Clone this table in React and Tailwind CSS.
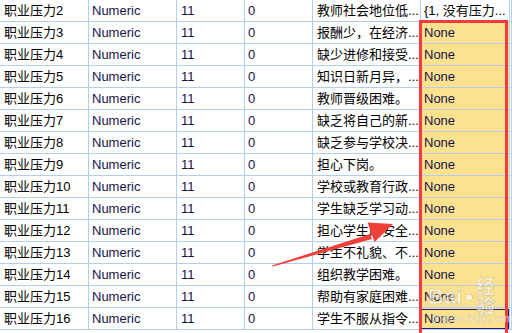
import React from 'react';

const rows = [
  ['职业压力2', '教师社会地位低...', '{1, 没有压力...'],
  ['职业压力3', '报酬少，在经济...', 'None'],
  ['职业压力4', '缺少进修和接受...', 'None'],
  ['职业压力5', '知识日新月异，...', 'None'],
  ['职业压力6', '教师晋级困难。', 'None'],
  ['职业压力7', '缺乏将自己的新...', 'None'],
  ['职业压力8', '缺乏参与学校决...', 'None'],
  ['职业压力9', '担心下岗。', 'None'],
  ['职业压力10', '学校或教育行政...', 'None'],
  ['职业压力11', '学生缺乏学习动...', 'None'],
  ['职业压力12', '担心学生的安全...', 'None'],
  ['职业压力13', '学生不礼貌、不...', 'None'],
  ['职业压力14', '组织教学困难。', 'None'],
  ['职业压力15', '帮助有家庭困难...', 'None'],
  ['职业压力16', '学生不服从指令...', 'None'],
];

const cell = 'h-full shrink-0 border-r border-[#b3cdec] flex items-center overflow-hidden whitespace-nowrap';

const Row = ({ name, label, values, index, last }) => {
  const isNone = values === 'None';
  return (
    <div className="flex h-[22px] border-b border-[#b3cdec]">
      <div className={`${cell} w-[89px] pl-[4px] text-black`}>{name}</div>
      <div className={`${cell} w-[88px] pl-[3px] text-[#14144a]`}>Numeric</div>
      <div className={`${cell} w-[68px] pl-[4px] text-[#14144a]`}>11</div>
      <div className={`${cell} w-[68px] pl-[3px] text-[#14144a]`}>0</div>
      <div className={`${cell} w-[108px] pl-[4px] text-black`}>{label}</div>
      <div
        className={`${cell} w-[89px] pl-[3px] relative ${
          isNone ? 'bg-[#fce28e] text-[#14144a]' : 'bg-white text-black'
        }`}
      >
        {values}
        {last && <div className="absolute inset-x-0 top-[1px] bottom-0 border border-[#1a1a8c]" />}
      </div>
      <div className={`${cell} flex-1`} />
    </div>
  );
};

export default function App() {
  return (
    <div
      className="relative w-[512px] h-[333px] overflow-hidden bg-white text-[13px] leading-none"
      style={{ fontFamily: '"Liberation Sans", "Noto Sans CJK SC", sans-serif' }}
    >
      {rows.map((r, i) => (
        <Row key={r[0]} name={r[0]} label={r[1]} values={r[2]} index={i} last={i === rows.length - 1} />
      ))}

      {/* red highlight box around the Missing column */}
      <div className="absolute left-[419px] top-[20px] w-[89px] h-[316px] border-[3px] border-[#f23b3b] pointer-events-none" />

      {/* red annotation arrow */}
      <svg className="absolute left-0 top-0 pointer-events-none" width="512" height="333">
        <polygon points="272,265.5 370,234 372,239 273,266.5" fill="#ee3f3a" />
        <polygon points="393,224 367.5,222.5 374.5,242" fill="#ee3f3a" />
      </svg>

      {/* watermark */}
      <div className="absolute left-[428px] top-[278px] flex items-center gap-[2px] text-[22px] font-bold text-white/60 pointer-events-none"
        style={{ WebkitTextStroke: '0.6px rgba(150,150,150,0.45)' }}>
        <span>Bai</span>
        <span className="text-[16px]">●</span>
        <span className="text-[19px]">经验</span>
      </div>
      <div className="absolute left-[432px] top-[314px] text-[10px] text-white/70 pointer-events-none"
        style={{ WebkitTextStroke: '0.3px rgba(150,150,150,0.5)' }}>
        jingyan.baidu.com
      </div>
    </div>
  );
}
